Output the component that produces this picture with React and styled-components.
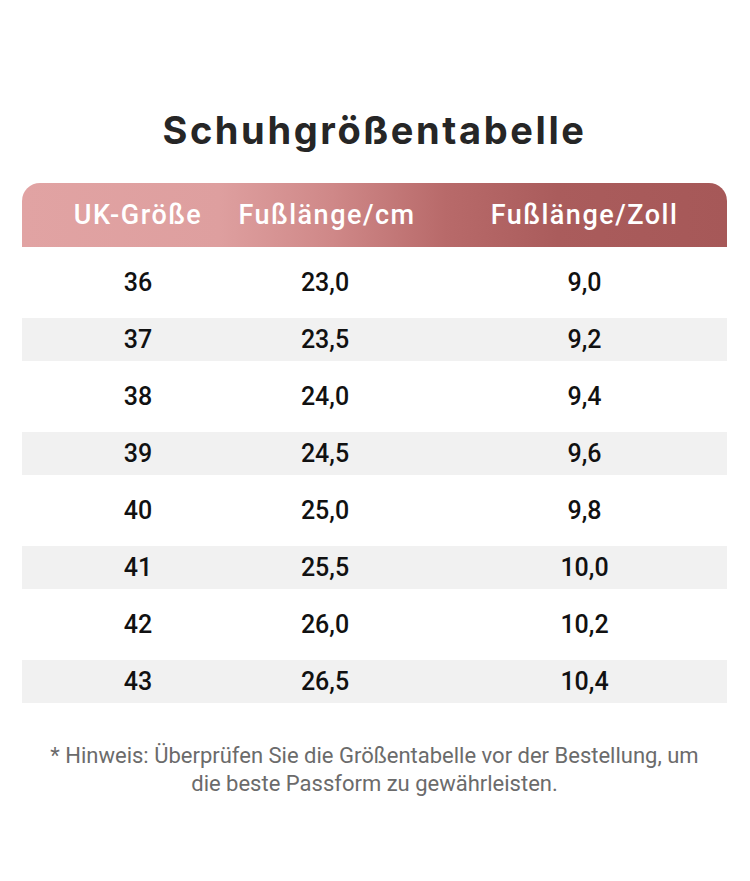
import React from 'react'
import styled, { createGlobalStyle } from 'styled-components'

const GlobalStyle = createGlobalStyle`
    html, body {
        margin:0;
        padding:0;
        background:#ffffff;
    }
    body {
        font-family: Roboto, "Noto Sans", sans-serif;
    }
`

const rows = [
    ['36', '23,0', '9,0'],
    ['37', '23,5', '9,2'],
    ['38', '24,0', '9,4'],
    ['39', '24,5', '9,6'],
    ['40', '25,0', '9,8'],
    ['41', '25,5', '10,0'],
    ['42', '26,0', '10,2'],
    ['43', '26,5', '10,4'],
]

const App = () => {
    return (
        <Wrapper>
            <GlobalStyle />
            <Title>Schuhgrößentabelle</Title>
            <Table>
                <Header>
                    <HeadCell>UK-Größe</HeadCell>
                    <HeadCell $shift="4px">Fußlänge/cm</HeadCell>
                    <HeadCell $shift="46px">Fußlänge/Zoll</HeadCell>
                </Header>
                {rows.map((r, i) => (
                    <Row key={r[0]} $striped={i % 2 === 1}>
                        <Cell>{r[0]}</Cell>
                        <Cell>{r[1]}</Cell>
                        <Cell $shift="46px">{r[2]}</Cell>
                    </Row>
                ))}
            </Table>
            <Note>
                * Hinweis: Überprüfen Sie die Größentabelle vor der Bestellung, um
                <br />
                die beste Passform zu gewährleisten.
            </Note>
        </Wrapper>
    )
}

export default App

const Wrapper = styled.div`
    width:750px;
    height:881px;
    box-sizing:border-box;
    padding:104px 23px 0 22px;
    display:flex;
    flex-direction:column;
    align-items:stretch;
`

const Title = styled.h1`
    margin:0;
    text-align:center;
    font-family:Inter, "Open Sans", sans-serif;
    font-weight:700;
    font-size:38px;
    line-height:52px;
    color:#262626;
    letter-spacing:2.6px;
`

const Table = styled.div`
    margin-top:27px;
    display:flex;
    flex-direction:column;
`

const Header = styled.div`
    height:64px;
    display:grid;
    grid-template-columns:232px 142px 1fr;
    align-items:center;
    border-radius:18px 18px 0 0;
    background:linear-gradient(90deg, #e1a3a3 0%, #de9f9f 28%, #cf8888 44%, #b86a6a 60%, #aa5c5c 76%, #a65858 100%);
`

const HeadCell = styled.div`
    display:flex;
    justify-content:center;
    color:#ffffff;
    font-family:Roboto, sans-serif;
    font-weight:500;
    font-size:27px;
    letter-spacing:1.5px;
    white-space:nowrap;
    padding-left:${p => p.$shift || '0'};
`

const Row = styled.div`
    height:${p => (p.$striped ? '43px' : '71px')};
    display:grid;
    grid-template-columns:232px 142px 1fr;
    align-items:center;
    background:${p => (p.$striped ? '#f1f1f1' : '#ffffff')};
`

const Cell = styled.div`
    display:flex;
    justify-content:center;
    color:#111111;
    font-family:Roboto, sans-serif;
    font-weight:500;
    font-size:25px;
    padding-left:${p => p.$shift || '0'};
`

const Note = styled.p`
    margin:39px 0 0;
    text-align:center;
    color:#6b6b6b;
    font-family:Roboto, sans-serif;
    font-size:22px;
    line-height:28px;
`
